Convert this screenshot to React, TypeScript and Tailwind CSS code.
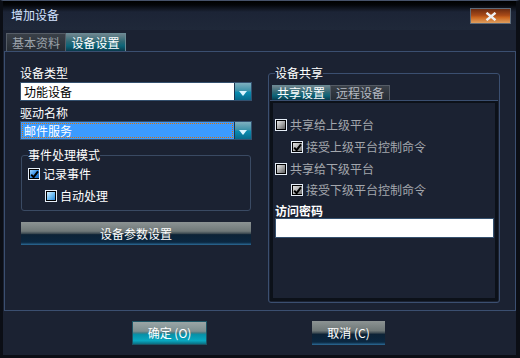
import { ReactNode } from "react";

type BoxKind = "on" | "off" | "dimOn" | "dimOff";

const BOX_BG: Record<BoxKind, string> = {
  on: "bg-[linear-gradient(135deg,#9fd4ff,#2f8be6_55%,#1563b8)]",
  off: "bg-[linear-gradient(135deg,#d8f0ff,#6cbcf4_55%,#2e88d8)]",
  dimOn: "bg-[linear-gradient(135deg,#e0e0e0,#a8a8a8_55%,#6a6a6a)]",
  dimOff: "bg-[linear-gradient(135deg,#e8e8e8,#a0a0a0_55%,#5e5e5e)]",
};

function Box({ kind }: { kind: BoxKind }) {
  const checked = kind === "on" || kind === "dimOn";
  return (
    <span className="w-[12px] h-[12px] shrink-0 border border-[#e6eef8] bg-black p-px flex">
      <span className={`flex-1 ${BOX_BG[kind]} flex items-center justify-center`}>
        {checked && (
          <svg width="9" height="9" viewBox="0 0 9 9">
            <path d="M1.2 4.6 L3.6 7.2 L8 1.4" fill="none" stroke="#000" strokeWidth="2" />
          </svg>
        )}
      </span>
    </span>
  );
}

function CheckRow({ kind, label, dim, className = "" }: { kind: BoxKind; label: string; dim?: boolean; className?: string }) {
  return (
    <div className={`h-[16px] flex items-center gap-[3px] ${className}`}>
      <Box kind={kind} />
      <span className={dim ? "text-[#a3a7ad]" : "text-white"}>{label}</span>
    </div>
  );
}

function Arrow() {
  return (
    <div className="w-[17px] h-full border-l border-[#1c3550] bg-[linear-gradient(to_bottom,#7fb0bf,#3f93aa_45%,#0a8cb0_55%,#066a8c)] flex items-end justify-center pb-[4px]">
      <svg width="8" height="5" viewBox="0 0 8 5">
        <path d="M0 0 H8 L4 5 Z" fill="#d9f4ff" />
      </svg>
    </div>
  );
}

function Select({ children, focused }: { children: ReactNode; focused?: boolean }) {
  return (
    <div className="h-[19px] w-[232px] flex border border-[#34506e] bg-[#0f1826]">
      {focused ? (
        <div className="flex-1 bg-[#3c9bff] p-[1px] flex">
          <div className="flex-1 border border-dotted border-[#d8720a] flex items-center pl-[1px] text-white leading-none">
            {children}
          </div>
        </div>
      ) : (
        <div className="flex-1 bg-white flex items-center pl-[3px] text-black leading-none">{children}</div>
      )}
      <Arrow />
    </div>
  );
}

function DarkButton({ children, className = "" }: { children: ReactNode; className?: string }) {
  return (
    <div
      className={`flex items-center justify-center text-white bg-[linear-gradient(to_bottom,#8c9393,#6f7878_40%,#3c4a52_50%,#0c2236_55%,#0b2740_88%,#2c6c98)] ${className}`}
    >
      {children}
    </div>
  );
}

function TealButton({ children, className = "" }: { children: ReactNode; className?: string }) {
  return (
    <div
      className={`flex items-center justify-center text-white border border-[#1c5464] bg-[linear-gradient(to_bottom,#9aa6a6,#7d8f90_42%,#3f7c86_50%,#0791a8_56%,#09a8c0_85%,#0b6f82)] ${className}`}
    >
      {children}
    </div>
  );
}

export default function App() {
  return (
    <div className="w-[520px] h-[358px] flex flex-col bg-[#1b2232] border-t border-t-[#46526a] border-l-[3px] border-l-[#0b0e15] border-r-[4px] border-r-[#0b0e15] border-b-[3px] border-b-[#0b0e15] font-['Noto_Sans_CJK_SC',sans-serif] text-[12px] select-none">
      {/* title bar */}
      <div className="h-[29px] flex items-start bg-[linear-gradient(to_bottom,#000,#04060a_4px,#1c2436_11px,#1f2839_28px)]">
        <span className="ml-[8px] mt-[6px] text-[#d2e2ff] leading-[16px]">增加设备</span>
        <div className="ml-auto mr-[5px] mt-[7px] w-[41px] h-[16px] border border-[#5e6a78] bg-[linear-gradient(to_bottom,#6a2a10,#a84a18_45%,#c8641e_60%,#e0a060)] flex items-center justify-center">
          <svg width="12" height="9" viewBox="0 0 12 9">
            <path d="M1.5 0.8 L10.5 8.2 M10.5 0.8 L1.5 8.2" stroke="#eef0f2" strokeWidth="2.4" />
          </svg>
        </div>
      </div>

      {/* tabs */}
      <div className="h-[21px] pt-[3px] pl-[3px] flex">
        <div className="w-[60px] h-[18px] border-t border-x border-[#555c66] bg-[linear-gradient(to_bottom,#3a4048,#262c34)] text-[#9ca3ab] flex items-center justify-center leading-none">
          基本资料
        </div>
        <div className="w-[60px] h-[18px] border-t border-r border-[#6a8a94] bg-[linear-gradient(to_bottom,#6e858e,#2e6874_45%,#0b6478_70%,#0a3a4c)] text-white flex items-center justify-center leading-none">
          设备设置
        </div>
      </div>

      {/* panel */}
      <div className="ml-[1px] w-[512px] h-[260px] border border-[#3b4f70] flex pl-[15px] pt-[13px]">
        {/* left column */}
        <div className="w-[232px] flex flex-col">
          <div className="h-[16px] leading-[16px] text-white">设备类型</div>
          <div className="mt-[1px]">
            <Select>功能设备</Select>
          </div>
          <div className="mt-[4px] h-[16px] leading-[16px] text-white">驱动名称</div>
          <Select focused>邮件服务</Select>

          <fieldset className="mt-[8px] ml-[1px] w-[230px] border border-[#3a4a63] rounded-[3px] px-[6px] pb-[6px]">
            <legend className="leading-[14px] text-white">事件处理模式</legend>
            <CheckRow kind="on" label="记录事件" className="mt-[4px]" />
            <CheckRow kind="off" label="自动处理" className="mt-[6px] ml-[17px]" />
          </fieldset>

          <DarkButton className="mt-[11px] ml-[1px] w-[230px] h-[23px]">设备参数设置</DarkButton>
        </div>

        {/* right column */}
        <fieldset className="ml-[16px] mt-[1px] w-[230px] h-[237px] border border-[#3b4f70] rounded-[3px] px-[1px] pb-[1px] flex flex-col">
          <legend className="ml-[5px] leading-[14px] text-white">设备共享</legend>
          <div className="mt-[5px] ml-[2px] flex h-[15px]">
            <div className="w-[58px] h-[15px] border-t border-[#6a8a94] bg-[linear-gradient(to_bottom,#6e858e,#2e6874_45%,#0b6478_70%,#0a3a4c)] text-white flex items-center justify-center leading-none">
              共享设置
            </div>
            <div className="w-[60px] h-[15px] border-t border-x border-[#555c66] bg-[linear-gradient(to_bottom,#3a4048,#262c34)] text-[#b4bac2] flex items-center justify-center leading-none">
              远程设备
            </div>
          </div>
          <div className="flex-1 border-t border-[#3b4f70] flex flex-col">
            <div className="flex-1 border-[3px] border-[#0c1119] border-t-[2px] flex flex-col pl-[2px] pt-[14px] pr-[1px]">
              <CheckRow kind="dimOff" label="共享给上级平台" dim />
              <CheckRow kind="dimOn" label="接受上级平台控制命令" dim className="mt-[6px] ml-[16px]" />
              <CheckRow kind="dimOff" label="共享给下级平台" dim className="mt-[6px]" />
              <CheckRow kind="dimOn" label="接受下级平台控制命令" dim className="mt-[5px] ml-[16px]" />
              <div className="mt-[5px] h-[15px] leading-[15px] text-white font-bold">访问密码</div>
              <div className="h-[20px] w-[219px] bg-white border border-[#34506e]" />
            </div>
          </div>
        </fieldset>
      </div>

      {/* footer */}
      <div className="flex-1 flex items-start pt-[10px]">
        <TealButton className="ml-[129px] w-[75px] h-[24px]">确定 (O)</TealButton>
        <DarkButton className="ml-[105px] w-[73px] h-[24px]">取消 (C)</DarkButton>
      </div>
    </div>
  );
}
